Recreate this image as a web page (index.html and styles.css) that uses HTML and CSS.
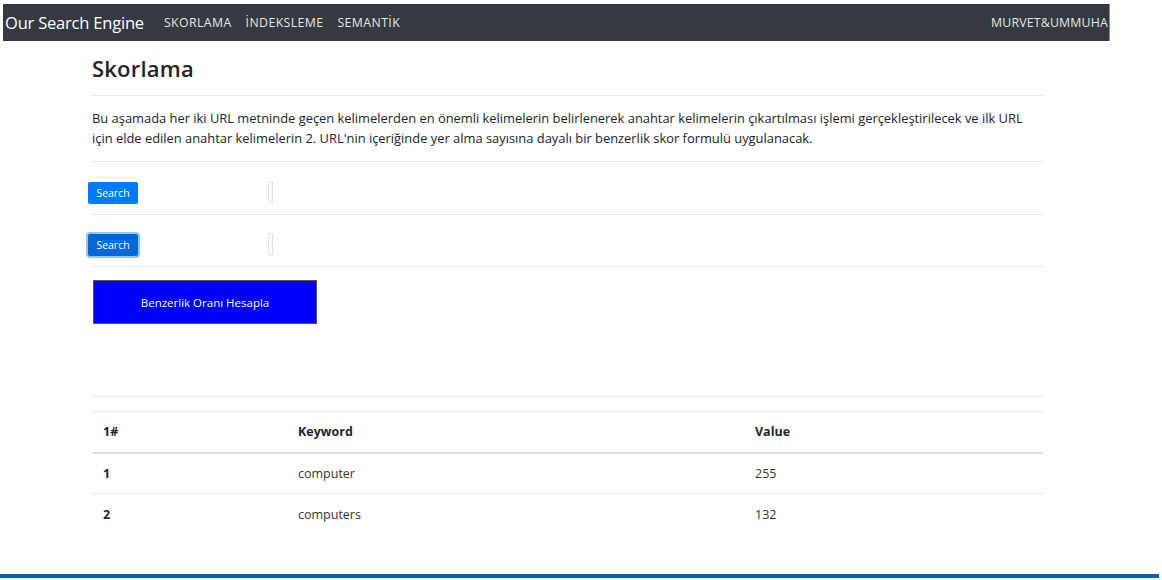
FILE: index.html
```html
<!DOCTYPE html>
<html lang="tr">
<head>
<meta charset="utf-8">
<title>Our Search Engine</title>
<link rel="stylesheet" href="styles.css">
</head>
<body>
<div class="page">
  <nav class="navbar">
    <span class="brand">Our Search Engine</span>
    <ul class="nav-links">
      <li>SKORLAMA</li>
      <li>İNDEKSLEME</li>
      <li>SEMANTİK</li>
    </ul>
    <span class="nav-user">MURVET&amp;UMMUHA</span>
  </nav>

  <main class="container">
    <h1 class="title">Skorlama</h1>
    <hr class="rule">
    <p class="lead">Bu aşamada her iki URL metninde geçen kelimelerden en önemli kelimelerin belirlenerek anahtar kelimelerin çıkartılması işlemi gerçekleştirilecek ve ilk URL için elde edilen anahtar kelimelerin 2. URL'nin içeriğinde yer alma sayısına dayalı bir benzerlik skor formulü uygulanacak.</p>
    <hr class="rule">
    <div class="search-row">
      <button class="btn-search">Search</button>
      <input class="url-input" type="text">
    </div>
    <hr class="rule">
    <div class="search-row second">
      <button class="btn-search focused">Search</button>
      <input class="url-input" type="text">
    </div>
    <hr class="rule">
    <button class="btn-calc">Benzerlik Oranı Hesapla</button>
    <hr class="rule rule-low">
    <table class="result">
      <thead>
        <tr><th class="c1">1#</th><th class="c2">Keyword</th><th class="c3">Value</th></tr>
      </thead>
      <tbody>
        <tr><th class="c1">1</th><td>computer</td><td>255</td></tr>
        <tr><th class="c1">2</th><td>computers</td><td>132</td></tr>
      </tbody>
    </table>
  </main>
</div>
<div class="bottom-bar"></div>
</body>
</html>
```

FILE: styles.css
```css
* { box-sizing: border-box; }
html, body { margin: 0; padding: 0; background: #fff; }
body {
  font-family: "Open Sans", "Noto Sans", "Liberation Sans", sans-serif;
  color: #212529;
  height: 580px;
  overflow: hidden;
  position: relative;
}
.page { padding: 4px 0 0 3px; }

.navbar {
  width: 1107px;
  height: 37px;
  background: #343a40;
  border-right: 1px solid #8a8d90;
  display: flex;
  align-items: center;
  padding-left: 2px;
  overflow: hidden;
  white-space: nowrap;
}
.brand {
  color: #fff;
  font-size: 16.5px;
  letter-spacing: -0.2px;
  margin-right: 20px;
}
.nav-links {
  list-style: none;
  margin: 0;
  padding: 0;
  display: flex;
  gap: 14px;
  color: #e6e6e6;
  font-size: 12.3px;
  letter-spacing: 0.4px;
  flex: 1;
}
.nav-user {
  color: #e6e6e6;
  font-size: 12.3px;
  letter-spacing: 0.2px;
  margin-right: 1px;
}

.container {
  width: 951px;
  margin-left: 89px;
}
.title {
  font-size: 22px;
  font-weight: 600;
  margin: 13px 0 0 0;
  line-height: 28px;
  letter-spacing: 0.2px;
}
.rule {
  border: 0;
  border-top: 1px solid #e9ecef;
  margin: 0;
}
.title + .rule { margin-top: 13px; }
.lead {
  font-size: 12.9px;
  line-height: 20px;
  margin: 12px 0 13px 0;
}
.search-row {
  display: flex;
  align-items: flex-end;
  height: 52px;
  padding-bottom: 10px;
  margin-left: -4px;
}
.search-row.second { height: 51px; padding-bottom: 10px; }
.btn-search {
  font-family: inherit;
  font-size: 10.5px;
  color: #fff;
  background: #007bff;
  border: 0;
  border-radius: 2px;
  width: 50px;
  height: 22px;
  padding: 0;
  margin-right: 130px;
}
.btn-search.focused {
  background: #0069d9;
  box-shadow: 0 0 0 2px rgba(38, 143, 255, 0.5);
}
.url-input {
  width: 5px;
  height: 23px;
  padding: 0;
  border: 1px solid #dfe3e8;
  border-radius: 2px;
}
.btn-calc {
  display: block;
  margin: 13px 0 0 1px;
  width: 224px;
  height: 44px;
  background: #0000ff;
  color: #fff;
  border: 1px solid #555;
  font-family: inherit;
  font-size: 11.5px;
}
.rule-low { margin-top: 72px; }

.result {
  width: 100%;
  border-collapse: collapse;
  margin-top: 14px;
  font-size: 12.5px;
}
.result th, .result td {
  text-align: left;
  padding: 0 11px;
  height: 41px;
  border-top: 1px solid #e9ecef;
  vertical-align: middle;
}
.result thead th {
  border-bottom: 2px solid #dee2e6;
  font-weight: 700;
}
.result tbody th { font-weight: 700; }
.result td { color: #333; }
.result .c1 { width: 195px; }
.result .c2 { width: 457px; }

.bottom-bar {
  position: absolute;
  left: 0;
  top: 574px;
  width: 1159px;
  height: 4px;
  background: #0a5db5;
}
```
